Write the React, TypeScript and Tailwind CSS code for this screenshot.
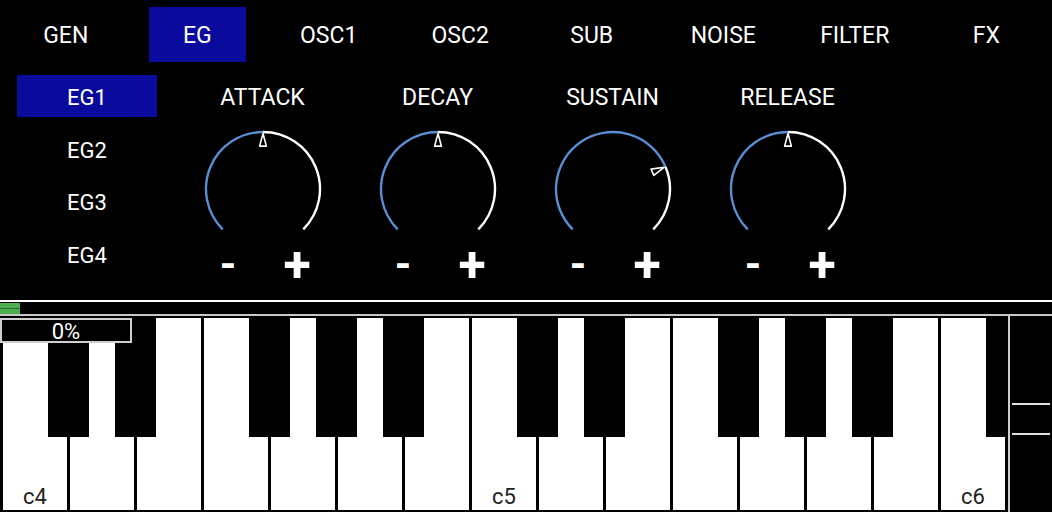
import React from "react";

const tabs = ["GEN", "EG", "OSC1", "OSC2", "SUB", "NOISE", "FILTER", "FX"];
const egs = ["EG1", "EG2", "EG3", "EG4"];
const knobs = [
  { name: "ATTACK", value: 0.5 },
  { name: "DECAY", value: 0.5 },
  { name: "SUSTAIN", value: 0.748 },
  { name: "RELEASE", value: 0.5 },
];

// black keys sit on these white-key separators
const blackSeps = [1, 2, 4, 5, 6, 8, 9, 11, 12, 13, 15];
const labels: Record<number, string> = { 0: "c4", 7: "c5", 14: "c6" };

function polar(cx: number, cy: number, r: number, deg: number) {
  const a = (deg * Math.PI) / 180;
  return { x: cx + r * Math.sin(a), y: cy - r * Math.cos(a) };
}

function arc(cx: number, cy: number, r: number, from: number, to: number) {
  const s = polar(cx, cy, r, from);
  const e = polar(cx, cy, r, to);
  const large = to - from > 180 ? 1 : 0;
  return `M ${s.x} ${s.y} A ${r} ${r} 0 ${large} 1 ${e.x} ${e.y}`;
}

function Knob({ value }: { value: number }) {
  const cx = 60;
  const cy = 59;
  const r = 57;
  const ang = -135 + 270 * value;
  const tip = polar(cx, cy, r - 1.5, ang);
  const b1 = polar(cx, cy, r - 14, ang - 4.5);
  const b2 = polar(cx, cy, r - 14, ang + 4.5);
  return (
    <svg width="120" height="118" viewBox="0 0 120 118">
      <path d={arc(cx, cy, r, -135, ang)} fill="none" stroke="#5a8ed2" strokeWidth="2.4" />
      <path d={arc(cx, cy, r, ang, 135)} fill="none" stroke="#ffffff" strokeWidth="2.4" />
      <polygon
        points={`${tip.x},${tip.y} ${b1.x},${b1.y} ${b2.x},${b2.y}`}
        fill="#000"
        stroke="#fff"
        strokeWidth="1.6"
        strokeLinejoin="round"
      />
    </svg>
  );
}

export default function App() {
  return (
    <div className="w-[1052px] h-[512px] bg-black overflow-hidden font-['Roboto',sans-serif] text-white">
      <div className="h-[300px]">
        <div className="grid grid-cols-8 pt-[7px]">
          {tabs.map((t) => (
            <div key={t} className="flex justify-center">
              <div
                className={
                  "w-[97px] h-[55px] flex items-center justify-center text-[23px] pt-[4px] " +
                  (t === "EG" ? "bg-[#0a0a9c]" : "")
                }
              >
                {t}
              </div>
            </div>
          ))}
        </div>

        <div className="flex mt-[13px]">
          <div className="w-[175px] flex flex-col gap-[10.5px]">
            {egs.map((e, i) => (
              <div
                key={e}
                className={
                  "ml-[17px] w-[140px] h-[42px] flex items-center justify-center text-[22px] pt-[3px] " +
                  (i === 0 ? "bg-[#0a0a9c]" : "")
                }
              >
                {e}
              </div>
            ))}
          </div>

          {knobs.map((k) => (
            <div key={k.name} className="w-[175px] flex flex-col items-center">
              <div className="h-[44px] flex items-center text-[23px] pt-[2px]">{k.name}</div>
              <div className="mt-[11px]">
                <Knob value={k.value} />
              </div>
              <div className="h-[34px] flex justify-center gap-[29px] font-bold leading-none">
                <span className="w-[40px] flex items-center justify-center text-[42px]">-</span>
                <span className="w-[40px] flex items-center justify-center text-[50px]">+</span>
              </div>
            </div>
          ))}
        </div>
      </div>

      <div className="h-[2px] bg-white" />
      <div className="h-[12px] pt-[1px]">
        <div className="w-[20px] h-[11px] flex flex-col">
          <div className="h-[5px] bg-[#4caf50]" />
          <div className="h-[1px] bg-[#2d6a30]" />
          <div className="h-[5px] bg-[#4caf50]" />
        </div>
      </div>
      <div className="h-[2px] bg-[#c8c8c8]" />

      <div className="h-[196px] flex">
        <div className="relative w-[1008px] h-full overflow-hidden">
          <div className="flex gap-[3px] pl-[3px] pt-[2px] pb-[2px] h-full">
            {Array.from({ length: 15 }).map((_, i) => (
              <div
                key={i}
                className="w-[64px] shrink-0 h-full bg-white flex items-end justify-center text-[22px] leading-[26px] text-[#222]"
              >
                {labels[i] ?? ""}
              </div>
            ))}
          </div>
          {blackSeps.map((s) => (
            <div
              key={s}
              className="absolute top-0 w-[41px] h-[121px] bg-black"
              style={{ left: 1.5 + s * 67 - 20.5 }}
            />
          ))}
          <div className="absolute left-0 top-[2px] w-[132px] h-[25px] bg-black border-2 border-[#d0d0d0] flex items-center justify-center text-[22px] leading-none pt-[2px]">
            0%
          </div>
        </div>
        <div className="w-[2px] h-full bg-[#cfcfcf]" />
        <div className="flex-1 flex flex-col pl-[2px] pr-[2px] pt-[87px]">
          <div className="h-[2px] bg-[#e0e0e0]" />
          <div className="h-[28px]" />
          <div className="h-[2px] bg-[#e0e0e0]" />
        </div>
      </div>
    </div>
  );
}
